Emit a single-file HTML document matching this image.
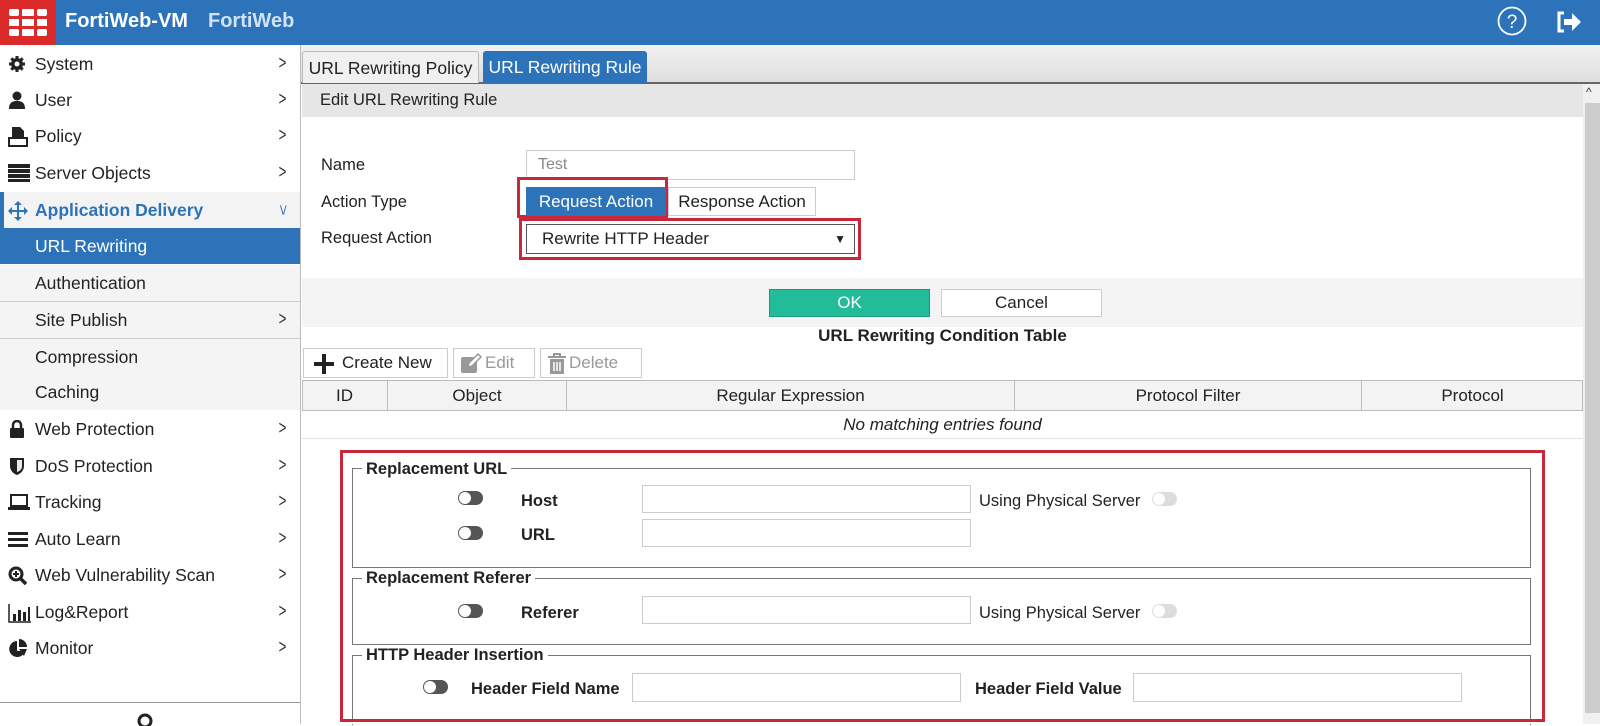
<!DOCTYPE html>
<html><head><meta charset="utf-8"><style>
*{box-sizing:border-box;margin:0;padding:0}
body{width:1600px;height:724px;overflow:hidden;background:#fff;font-family:"Liberation Sans",Arial,sans-serif;color:#222;position:relative;font-size:16px}
.a{position:absolute}
.hdr{left:0;top:0;width:1600px;height:45px;background:#2c73b9}
.logo{left:0;top:0;width:56px;height:45px;background:#da2a2a}
.side{left:0;top:45px;width:301px;height:679px;border-right:1px solid #bbb;background:#fff}
.it{position:absolute;left:0;width:300px;height:36px;line-height:36px;font-size:17.5px;padding-left:35px;color:#222}
.it .ar{position:absolute;right:12px;top:0;font-size:19px;color:#333;transform:scaleX(.7)}
.it svg{position:absolute;left:8px;top:9px}
.sub{background:#f4f4f4}
.tabbar{left:301px;top:45px;width:1299px;height:39px;background:linear-gradient(#f2f2f2,#dedede);border-bottom:2px solid #666}
.tab{position:absolute;top:51px;height:32px;line-height:32px;font-size:17.5px;text-align:center;border-radius:3px 3px 0 0}
.lbl{position:absolute;font-size:16.5px}
.inp{position:absolute;border:1px solid #ccc;background:#fff}
.b{font-weight:bold}
.tg{position:absolute;width:25px;height:14px;border-radius:7px;background:#555}
.tg::after{content:"";position:absolute;left:1px;top:1px;width:12px;height:12px;border-radius:6px;background:#fff}
.fs{position:absolute;border:1px solid #777}
.lg{position:absolute;background:#fff;font-weight:bold;font-size:16.5px;padding:0 4px;line-height:18px}
.th{position:absolute;top:381px;height:29px;line-height:29px;text-align:center;font-size:17px;border-right:1px solid #bbb}
</style></head><body>
<div class="a hdr"></div>
<div class="a logo"><svg width="56" height="45" viewBox="0 0 56 45"><g fill="#fff"><rect x="9" y="9" width="10" height="7" rx="2"/><rect x="22" y="9" width="12" height="7" rx="1"/><rect x="37" y="9" width="10" height="7" rx="2"/><rect x="9" y="19" width="10" height="7"/><rect x="22" y="19" width="12" height="7"/><rect x="37" y="19" width="10" height="7"/><rect x="9" y="29" width="10" height="7" rx="2"/><rect x="22" y="29" width="12" height="7" rx="1"/><rect x="37" y="29" width="10" height="7" rx="2"/></g></svg></div>
<div class="a" style="left:65px;top:10px;color:#fff;font-weight:bold;font-size:20px">FortiWeb-VM</div>
<div class="a" style="left:208px;top:10px;color:#d3e3f5;font-weight:bold;font-size:20px">FortiWeb</div>
<svg class="a" style="left:1497px;top:6px" width="30" height="30"><circle cx="15" cy="15" r="13.5" fill="none" stroke="#fff" stroke-width="1.8"/><text x="15" y="22" text-anchor="middle" fill="#fff" font-size="19" font-family="Liberation Sans">?</text></svg>
<svg class="a" style="left:1555px;top:10px" width="28" height="24"><path d="M9 3H4v18h5" fill="none" stroke="#fff" stroke-width="3"/><path d="M9 9h8V3l9 9-9 9v-6H9z" fill="#fff"/></svg>

<div class="a side">
<div class="it" style="top:1px"><svg width="18" height="18" viewBox="0 0 18 18"><circle cx="9" cy="9" r="6" fill="#222"/><g stroke="#222" stroke-width="3"><path d="M9 1v16M1 9h16M3.3 3.3l11.4 11.4M14.7 3.3 3.3 14.7"/></g><circle cx="9" cy="9" r="2.5" fill="#fff"/></svg>System<span class="ar">&gt;</span></div>
<div class="it" style="top:37px"><svg width="18" height="18"><circle cx="9" cy="5" r="4.5" fill="#222"/><path d="M1 18c0-7 4-8 8-8s8 1 8 8z" fill="#222"/></svg>User<span class="ar">&gt;</span></div>
<div class="it" style="top:73px"><svg width="20" height="20"><path d="M4 0h8l4 4v8H4z" fill="#222"/><path d="M1 11h18v8H1z" fill="none" stroke="#222" stroke-width="2"/></svg>Policy<span class="ar">&gt;</span></div>
<div class="it" style="top:110px"><svg width="22" height="18"><g fill="#222"><rect x="0" y="0" width="22" height="4"/><rect x="0" y="5" width="22" height="4"/><rect x="0" y="10" width="22" height="4"/><rect x="0" y="15" width="22" height="3"/></g></svg>Server Objects<span class="ar">&gt;</span></div>
<div class="it" style="top:147px;background:#f3f3f3;color:#2c73b9;font-weight:bold;border-left:4px solid #2c73b9;padding-left:31px"><svg style="left:4px" width="20" height="20" viewBox="0 0 20 20"><g fill="#2c73b9"><path d="M9 2h2v16H9zM2 9h16v2H2z"/><path d="M10 0l4 4H6zM10 20l-4-4h8zM0 10l4-4v8zM20 10l-4 4V6z"/></g></svg>Application Delivery<span class="ar" style="transform:rotate(90deg) scaleY(.7);color:#2c73b9;font-weight:normal">&gt;</span></div>
<div class="it" style="top:183px;background:#2c73b9;color:#fff">URL Rewriting</div>
<div class="it sub" style="top:220px">Authentication</div>
<div class="it sub" style="top:256px;border-top:1px solid #ccc;height:37px">Site Publish<span class="ar">&gt;</span></div>
<div class="it sub" style="top:293px;border-top:1px solid #ccc">Compression</div>
<div class="it sub" style="top:329px">Caching</div>
<div class="it" style="top:366px"><svg width="18" height="18"><path d="M5 8V5a4 4 0 0 1 8 0v3" fill="none" stroke="#222" stroke-width="2.5"/><rect x="2" y="8" width="14" height="10" rx="1" fill="#222"/></svg>Web Protection<span class="ar">&gt;</span></div>
<div class="it" style="top:403px"><svg width="18" height="18"><path d="M2 1h14v8c0 5-4 8-7 9-3-1-7-4-7-9z" fill="#222"/><path d="M9 3h5v6c0 3-2 5-5 6z" fill="#fff" opacity=".9"/></svg>DoS Protection<span class="ar">&gt;</span></div>
<div class="it" style="top:439px"><svg width="22" height="18"><rect x="3" y="2" width="16" height="11" fill="none" stroke="#222" stroke-width="2"/><rect x="0" y="14" width="22" height="3" fill="#222"/></svg>Tracking<span class="ar">&gt;</span></div>
<div class="it" style="top:476px"><svg width="20" height="18"><g fill="#222"><rect y="2" width="20" height="3"/><rect y="8" width="20" height="3"/><rect y="14" width="20" height="3"/></g></svg>Auto Learn<span class="ar">&gt;</span></div>
<div class="it" style="top:512px"><svg width="20" height="20"><circle cx="8" cy="8" r="6" fill="none" stroke="#222" stroke-width="3"/><path d="M12 12l6 6" stroke="#222" stroke-width="3.5"/><path d="M8 5v6M5 8h6" stroke="#222" stroke-width="2"/></svg>Web Vulnerability Scan<span class="ar">&gt;</span></div>
<div class="it" style="top:549px"><svg width="24" height="20"><path d="M1 1v18h22" fill="none" stroke="#222" stroke-width="1.5"/><g fill="#222"><rect x="5" y="11" width="3" height="7"/><rect x="10" y="7" width="3" height="11"/><rect x="15" y="9" width="3" height="9"/><rect x="20" y="4" width="2" height="14"/></g></svg>Log&amp;Report<span class="ar">&gt;</span></div>
<div class="it" style="top:585px"><svg width="20" height="20"><path d="M9 2a8 8 0 1 0 8 10H9z" fill="#222"/><path d="M11 0a8 8 0 0 1 8 8h-8z" fill="#222"/><path d="M11 10h8l-3 7z" fill="#222"/></svg>Monitor<span class="ar">&gt;</span></div>
<div class="a" style="left:0;top:657px;width:300px;border-top:1px solid #999"></div>
<svg class="a" style="left:136px;top:667px" width="20" height="14"><circle cx="9" cy="9" r="6" fill="none" stroke="#222" stroke-width="3"/></svg>
</div>

<div class="a tabbar"></div>
<div class="tab" style="left:302px;width:177px;background:#f0f0f0;border:1px solid #bbb;border-bottom:none">URL Rewriting Policy</div>
<div class="tab" style="left:483px;width:164px;background:#2c73b9;color:#fff">URL Rewriting Rule</div>
<div class="a" style="left:302px;top:84px;width:1281px;height:33px;background:#e6e6e6;line-height:33px;padding-left:18px;font-size:16.5px">Edit URL Rewriting Rule</div>
<div class="a" style="left:1583px;top:84px;width:17px;height:640px;background:#f0f0f0"></div>
<div class="a" style="left:1585px;top:103px;width:15px;height:610px;background:#cdcdcd"></div>
<div class="a" style="left:1586px;top:85px;font-size:12px;color:#333">^</div>

<div class="lbl" style="left:321px;top:156px">Name</div>
<div class="inp" style="left:526px;top:150px;width:329px;height:30px;line-height:28px;padding-left:11px;color:#888">Test</div>
<div class="lbl" style="left:321px;top:193px">Action Type</div>
<div class="a" style="left:517px;top:177px;width:151px;height:41px;border:3px solid #c8283a"></div>
<div class="a" style="left:526px;top:187px;width:140px;height:29px;background:#2c73b9;color:#fff;line-height:29px;text-align:center;font-size:17px">Request Action</div>
<div class="a" style="left:668px;top:187px;width:148px;height:29px;border:1px solid #ccc;line-height:27px;text-align:center;font-size:17px">Response Action</div>
<div class="lbl" style="left:321px;top:229px">Request Action</div>
<div class="a" style="left:519px;top:218px;width:342px;height:42px;border:3px solid #c8283a"></div>
<div class="inp" style="left:526px;top:224px;width:329px;height:30px;border-color:#555;line-height:28px;padding-left:15px;font-size:17px">Rewrite HTTP Header<span style="position:absolute;right:8px;top:0;font-size:12px">▼</span></div>

<div class="a" style="left:302px;top:278px;width:1281px;height:49px;background:#f4f4f4"></div>
<div class="a" style="left:769px;top:289px;width:161px;height:28px;background:#22bc98;border:1px solid #1a9a7b;color:#fff;text-align:center;line-height:26px;font-size:17px">OK</div>
<div class="a" style="left:941px;top:289px;width:161px;height:28px;background:#fff;border:1px solid #ccc;text-align:center;line-height:26px;font-size:17px">Cancel</div>
<div class="a b" style="left:302px;width:1281px;top:326px;text-align:center;font-size:17px">URL Rewriting Condition Table</div>

<div class="a" style="left:303px;top:348px;width:145px;height:30px;border:1px solid #ccc;line-height:28px;padding-left:38px;font-size:17px">Create New<svg style="position:absolute;left:10px;top:5px" width="20" height="20"><path d="M10 0v20M0 10h20" stroke="#222" stroke-width="4"/></svg></div>
<div class="a" style="left:453px;top:348px;width:82px;height:30px;border:1px solid #ccc;line-height:28px;padding-left:31px;font-size:17px;color:#999">Edit<svg style="position:absolute;left:6px;top:4px" width="22" height="22"><rect x="1" y="4" width="16" height="16" rx="2" fill="#999"/><path d="M8 14l1-4 9-9 3 3-9 9z" fill="#fff" stroke="#999" stroke-width="1.5"/></svg></div>
<div class="a" style="left:540px;top:348px;width:102px;height:30px;border:1px solid #ccc;line-height:28px;padding-left:28px;font-size:17px;color:#999">Delete<svg style="position:absolute;left:6px;top:4px" width="20" height="22"><path d="M1 4h18M7 4V1h6v3" fill="none" stroke="#999" stroke-width="2"/><rect x="3" y="6" width="14" height="15" fill="#999"/><path d="M7 9v9M10 9v9M13 9v9" stroke="#fff" stroke-width="1.5"/></svg></div>

<div class="a" style="left:302px;top:380px;width:1281px;height:31px;background:#f3f3f3;border:1px solid #bbb"></div>
<div class="th" style="left:302px;width:86px">ID</div>
<div class="th" style="left:388px;width:179px">Object</div>
<div class="th" style="left:567px;width:448px">Regular Expression</div>
<div class="th" style="left:1015px;width:347px">Protocol Filter</div>
<div class="th" style="left:1362px;width:221px;border:none">Protocol</div>
<div class="a" style="left:302px;top:411px;width:1281px;height:28px;border-bottom:1px solid #e3e3e3;text-align:center;line-height:28px;font-style:italic;font-size:17px">No matching entries found</div>

<div class="fs" style="left:352px;top:468px;width:1179px;height:100px"></div>
<div class="lg" style="left:362px;top:460px">Replacement URL</div>
<div class="tg" style="left:458px;top:491px"></div><div class="lbl b" style="left:521px;top:492px">Host</div>
<div class="inp" style="left:642px;top:485px;width:329px;height:28px"></div>
<div class="lbl" style="left:979px;top:492px">Using Physical Server</div>
<div class="tg" style="left:1152px;top:492px;background:#ddd"></div>
<div class="tg" style="left:458px;top:526px"></div><div class="lbl b" style="left:521px;top:526px">URL</div>
<div class="inp" style="left:642px;top:519px;width:329px;height:28px"></div>

<div class="fs" style="left:352px;top:578px;width:1179px;height:67px"></div>
<div class="lg" style="left:362px;top:569px">Replacement Referer</div>
<div class="tg" style="left:458px;top:604px"></div><div class="lbl b" style="left:521px;top:604px">Referer</div>
<div class="inp" style="left:642px;top:596px;width:329px;height:28px"></div>
<div class="lbl" style="left:979px;top:604px">Using Physical Server</div>
<div class="tg" style="left:1152px;top:604px;background:#ddd"></div>

<div class="fs" style="left:352px;top:655px;width:1179px;height:70px;border-bottom:none"></div>
<div class="lg" style="left:362px;top:646px">HTTP Header Insertion</div>
<div class="tg" style="left:423px;top:680px"></div><div class="lbl b" style="left:471px;top:680px">Header Field Name</div>
<div class="inp" style="left:632px;top:673px;width:329px;height:29px"></div>
<div class="lbl b" style="left:975px;top:680px">Header Field Value</div>
<div class="inp" style="left:1133px;top:673px;width:329px;height:29px"></div>
<div class="a" style="left:340px;top:450px;width:1205px;height:272px;border:3px solid #c8283a"></div>
<div class="a" style="left:340px;top:722px;width:1205px;height:2px;background:#fff"></div>
</body></html>
